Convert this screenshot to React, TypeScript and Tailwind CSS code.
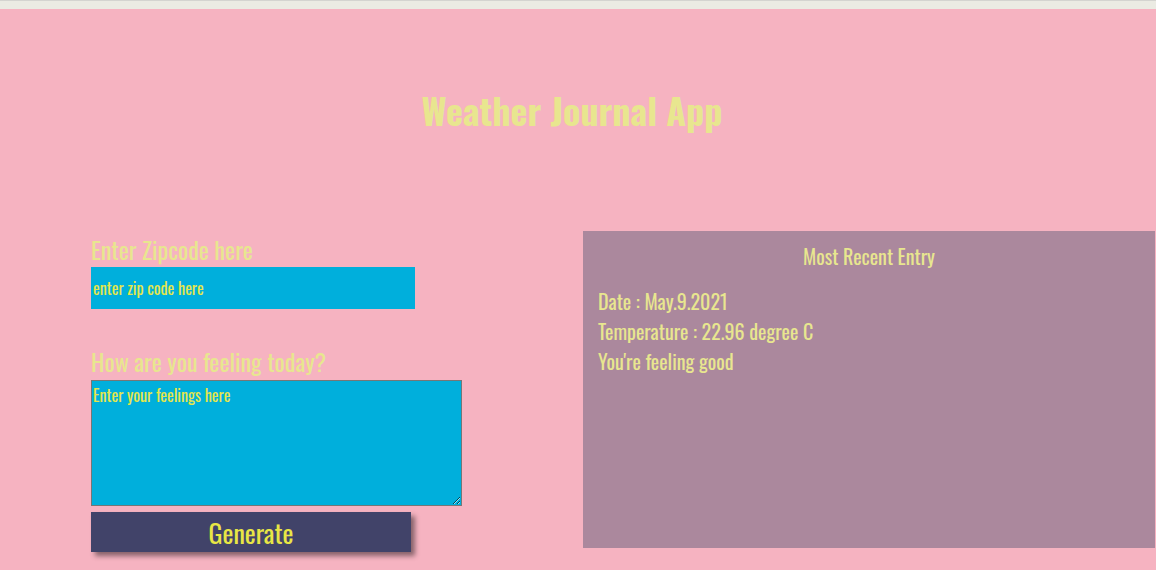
const font = "font-['Oswald','Liberation_Sans_Narrow','DejaVu_Sans_Condensed',sans-serif]";

export default function App() {
  return (
    <div className={`h-[570px] w-full overflow-hidden bg-[#f6b3c1] ${font}`}>
      <div className="h-[9px] border-t border-[#d4d4d0] bg-[#ebebe3]" />

      <h1 className="mt-[81px] pr-[12px] text-center text-[36px] leading-[40px] font-bold text-[#e8e68f]">
        Weather Journal App
      </h1>

      <div className="mt-[101px] flex">
        <div className="ml-[91px] flex w-[492px] flex-col pt-[6px]">
          <label className="mb-[6px] text-[24px] leading-[24px] text-[#e8e68f]">Enter Zipcode here</label>
          <input
            className="h-[42px] w-[324px] bg-[#00afdc] px-[2px] text-[16px] text-[#e6e64b] outline-none placeholder:text-[#e6e64b]"
            placeholder="enter zip code here"
          />
          <label className="mt-[37px] mb-[4px] text-[24px] leading-[30px] text-[#e8e68f]">
            How are you feeling today?
          </label>
          <textarea
            className="h-[126px] w-[371px] resize border border-[#767676] bg-[#00afdc] px-[1px] py-[2px] text-[16px] text-[#e6e64b] outline-none placeholder:text-[#e6e64b]"
            placeholder="Enter your feelings here"
          />
          <button className="mt-[6px] h-[40px] w-[320px] bg-[#414369] text-[26px] text-[#e8e645] shadow-[4px_4px_5px_rgba(0,0,0,0.45)]">
            Generate
          </button>
        </div>

        <div className="h-[317px] w-[572px] bg-[#ab889d] px-[15px] pt-[10px] text-[#e8e68f]">
          <div className="text-center text-[20px] leading-[30px]">Most Recent Entry</div>
          <div className="mt-[15px] text-[20px] leading-[30px]">
            <div>Date : May.9.2021</div>
            <div>Temperature : 22.96 degree C</div>
            <div>You're feeling good</div>
          </div>
        </div>
      </div>
    </div>
  );
}
